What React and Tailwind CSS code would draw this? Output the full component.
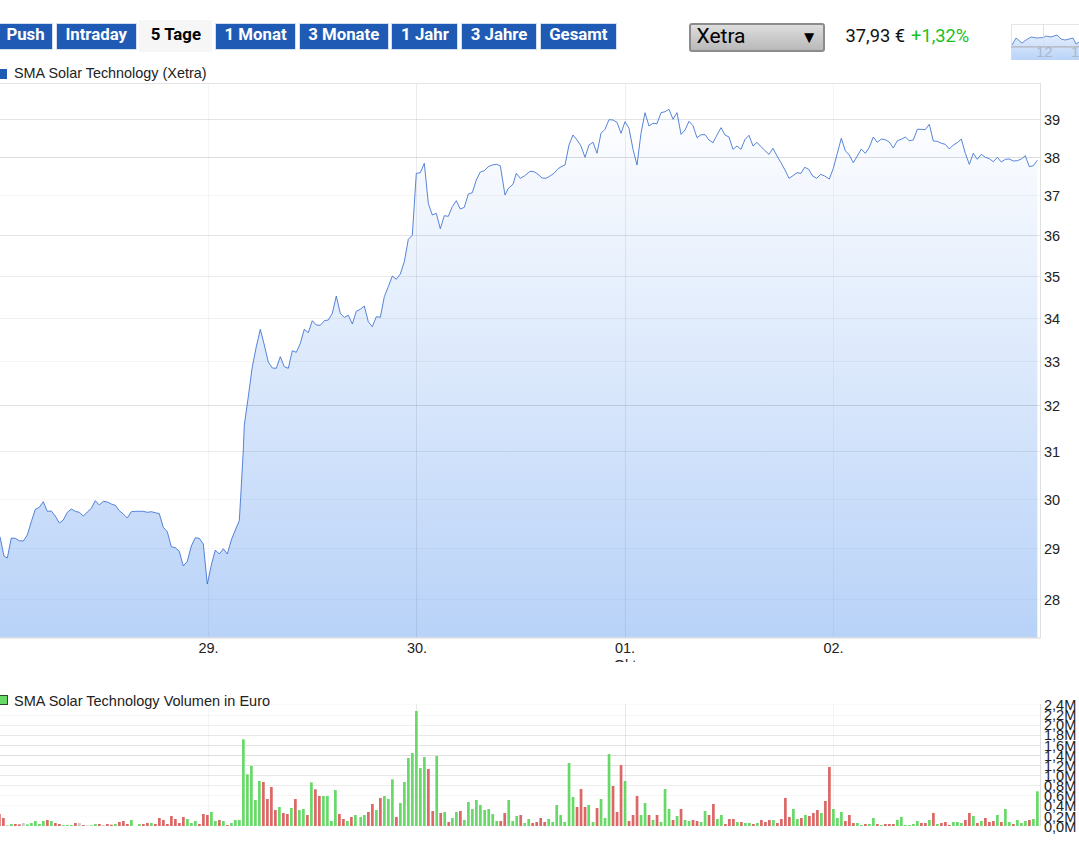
import React from "react";

const seg = (ox, oy, arr) => arr.map(([x, y]) => [ox + x / 3, oy + y / 3]);

const line = [
  ...seg(0, 480, [[0,170],[12,228],[22,234],[34,174],[46,175],[58,182],[70,183],[82,165],[94,125],[106,88],[118,82],[130,65],[142,94],[154,93],[166,108],[178,129],[190,120],[202,97],[214,87],[226,94],[238,97],[250,108],[262,96],[274,85],[286,62],[298,75],[310,64],[322,66],[334,72],[346,76],[358,92],[370,102],[382,114],[394,95],[406,94],[418,94],[430,94],[442,97],[454,95],[466,98],[478,101],[490,142],[502,155],[514,200],[526,203],[538,214],[550,258],[562,244],[574,198],[586,173],[598,175],[610,192],[622,312],[634,255],[646,210],[658,222],[670,206],[682,222],[694,180],[706,150],[718,122],[722,50]]),
  ...seg(230, 150, [[40,900],[43,825],[55,740],[67,650],[79,590],[91,538],[103,585],[115,636],[127,654],[139,655],[151,620],[163,650],[175,655],[187,602],[199,607],[211,580],[223,538],[235,548],[247,512],[259,525],[271,526],[283,512],[295,510],[307,490],[319,438],[331,490],[343,502],[355,496],[367,522],[379,484],[391,478],[403,468],[415,515],[427,530],[439,500],[451,502],[463,440],[475,410],[487,378],[499,388],[511,372],[523,335],[535,268],[547,256],[559,70],[571,68],[583,40],[595,160],[607,195],[619,190],[631,236],[643,197],[655,199],[667,170],[679,152],[691,177],[703,172],[715,132],[727,128],[739,90],[751,66],[763,62],[775,50],[787,45],[799,43],[811,47],[825,135],[835,115],[849,103],[859,70],[871,85],[883,78]]),
  ...seg(530, 90, [[0,244],[12,245],[24,253],[36,264],[48,265],[60,258],[72,250],[84,236],[96,229],[105,225],[117,165],[129,135],[141,150],[153,168],[165,202],[177,165],[189,157],[201,190],[213,130],[225,118],[237,89],[249,90],[261,97],[273,130],[285,95],[297,115],[309,178],[321,225],[333,130],[345,68],[357,108],[369,100],[381,101],[393,68],[405,65],[417,58],[429,88],[441,68],[453,133],[465,120],[477,94],[489,107],[501,143],[513,134],[525,134],[537,150],[549,158],[561,135],[573,113],[585,135],[597,141],[609,178],[621,168],[633,178],[645,148],[657,136],[669,168],[681,157],[693,170],[705,182],[717,193],[729,175],[741,198],[753,218],[765,240],[777,265],[789,257],[801,248],[813,250]]),
  ...seg(800, 90, [[14,232],[26,238],[38,258],[50,265],[62,253],[74,258],[88,267],[100,235],[112,190],[124,145],[136,182],[148,195],[160,218],[172,198],[184,177],[196,190],[208,172],[220,141],[232,157],[244,147],[256,149],[268,156],[280,174],[292,152],[304,148],[316,141],[328,152],[340,150],[352,118],[364,118],[376,119],[388,103],[400,153],[412,154],[424,160],[436,163],[448,177],[460,165],[472,158],[484,147],[496,190],[508,223],[520,190],[532,208],[544,193],[556,202],[568,206],[580,215],[592,202],[604,216],[616,208],[628,207],[640,213],[652,212],[664,207],[676,197],[688,230],[700,227],[712,211]]),
];

const Y0 = 83;
const linePts = line.map(([x, y]) => `${x.toFixed(1)},${y.toFixed(1)}`).join(" ");
const areaPts = `${linePts} ${line[line.length - 1][0].toFixed(1)},638 0,638`;

const hLines = [
  [119.5, 0.11], [157.5, 0.13], [195.5, 0.04], [235.5, 0.1], [276.5, 0.08], [318.5, 0.05],
  [361.5, 0.04], [405.5, 0.12], [451.5, 0.08], [499.5, 0.03], [548.5, 0.03], [599.5, 0.03],
];
const yLabels = [[39,119.5],[38,157.5],[37,195.5],[36,235.5],[35,276.5],[34,318.5],[33,361.5],[32,405.5],[31,451.5],[30,499.5],[29,548.5],[28,599.5]];
const vLines = [[208.5, 0.04], [416.5, 0.08], [625.5, 0.07], [833.5, 0.04]];
const dayLabels = [["29.", 208.5], ["30.", 417], ["01.", 625], ["02.", 833.5]];

const vol1 = "-2r372 10r384 22n405 34g402 46r402 58r403 70n399 82g403 94g399 106g393 118g402 130g393 142r390 154g393 166r399 178r402 190g405 202g405 214g405 226r399 238n399 250r405 262n406 274g406 286g402 298r402 310n405 322r402 334r404 346g402 358r396 370r393 382r402 394g390 418g402 430r402 442r399 454g399 466r402 478r384 490r390 502r402 514r378 526r387 538r399 550r381 562g387 574g399 586g393 598r402 610r372 622r375 634g366 646g393 658r390 670g393 682r405 694g399 706g390 718g390 730g148 742g253 754g228 766g330 778g273 790r276 802r327 814r291 826r360 838g351 850r369 862r372 874g354 886r327 898g360 910g357 922r375 934g277 946r298 958r318 970g318 982g318 994g393 1006g300 1018r372 1030r387 1042g393 1054r381 1066g375";
const vol2 = "2g381 13g375 25r366 37r342 49g360 61r324 73g318 85g327 97g268 109r381 121g339 133g276 145g204 157g189 169g63 181g234 193g201 205r237 218r363 230g198 242r369 254g366 266r396 277g384 289g366 301r363 313g390 325g336 337g357 349g330 361g345 374g360 386g357 398g372 410g393 422r393 434r369 446g330 458g393 470g378 482r375 494g399 506g387 518r399 530r396 542r384 554r396 566g387 578g396 590g345 602g375 614g396 627g219 639g321 651r351 663r297 675r351 686g345 699g396 711r354 723g327 735g384 747g192 759r288 771r366 783r225 795g273 807r393 819r375 831r318 843g375 855g339 867r375 879g390 891r375 903g396 915g297 927g357 939r390 951g378 963r357 975g390 987g393 999r390 1011r393 1023g396 1035g363 1047r375 1060r342 1072g387";
const vol3 = "4g375 16r402 28r387 40r387 52g396 64r396 76g399 88g399 100r402 112g399 124r390 136r396 148r390 160g390 172r399 184r387 196r324 208r381 220g357 232g387 244r384 256g375 268r378 280r369 292r360 304g369 316r333 328r231 340g357 352g384 364g366 376r393 388r375 400r399 412g399 424g405 436r402 448g402 460g384 472r402 484g405 496r402 508r402 520r402 532g390 544g381 556g405 568g405 580g402 592g393 604r399 616r399 628g390 640r369 652g402 664r399 676r396 688r405 700g396 712g396 724g399 736r390 748r369 760g378 772r399 784g393 796r384 808r396 820r393 832g375 844r396 856g357 868g396 880r402 892g390 904g399 916g393 928r390 940g387 952g304";

const VOL_TOP = 698;
const parse = (ox, s) =>
  s.split(" ").map((t) => {
    const m = t.match(/^(-?\d+)([rgn])(\d+)$/);
    return { x: ox + Number(m[1]) / 3, c: m[2], y: 690 + Number(m[3]) / 3 };
  });
const bars = [...parse(0, vol1), ...parse(360, vol2), ...parse(720, vol3)];
const barColor = { r: "#dc6767", g: "#68d968", n: "#c9c9c9" };

const volGrid = [
  [704.5, 0.02], [715.5, 0.04], [725.5, 0.06], [735.5, 0.09], [745.5, 0.11], [755.5, 0.13],
  [765.5, 0.11], [775.5, 0.09], [785.5, 0.07], [795.5, 0.04], [805.5, 0.02], [816.5, 0.01],
];
const volLabels = ["2,4M","2,2M","2,0M","1,8M","1,6M","1,4M","1,2M","1,0M","0,8M","0,6M","0,4M","0,2M","0,0M"];

const buttons = [
  { label: "Push", w: "w-[55px]" },
  { label: "Intraday", w: "w-[81px]" },
  { label: "5 Tage", w: "w-[73px]", active: true },
  { label: "1 Monat", w: "w-[81px]" },
  { label: "3 Monate", w: "w-[90px]" },
  { label: "1 Jahr", w: "w-[67px]" },
  { label: "3 Jahre", w: "w-[76px]" },
  { label: "Gesamt", w: "w-[77px]" },
];

const axisText = "font-['Liberation_Sans',sans-serif] text-[14.5px] fill-[#222222]";

function Thumbnail() {
  const pts = "1,21 5,14 11,19 15,16 20,13 26,14 32,13.5 35,12 40,13 46,11 50,15 54,16 58,15 62,14 65,20 68,18";
  return (
    <svg width="68" height="36" viewBox="0 0 68 36" className="block">
      <defs>
        <linearGradient id="thumbFill" x1="0" y1="0" x2="0" y2="1">
          <stop offset="0" stopColor="#e4edfc" />
          <stop offset="1" stopColor="#b9d3f8" />
        </linearGradient>
      </defs>
      <polygon points={`${pts} 68,36 0,36 0,22`} fill="url(#thumbFill)" />
      <polyline points={pts} fill="none" stroke="#3f74cf" strokeWidth="0.8" />
      <rect x="0" y="0" width="68" height="0.8" fill="#e0e0e0" />
      <rect x="0" y="0" width="0.8" height="36" fill="#dddddd" />
      <rect x="32" y="0" width="0.8" height="23" fill="#dddddd" />
      <rect x="0" y="22.4" width="68" height="1" fill="#a9a9a9" />
      <text x="25" y="33" className="font-['Liberation_Sans',sans-serif] text-[15px] fill-[#a9b8cc]">12</text>
      <text x="60" y="33" className="font-['Liberation_Sans',sans-serif] text-[15px] fill-[#a9b8cc]">13</text>
    </svg>
  );
}

function PriceChart() {
  return (
    <svg width="1079" height="579" viewBox={`0 ${Y0} 1079 579`} className="block">
      <defs>
        <linearGradient id="areaFill" gradientUnits="userSpaceOnUse" x1="0" y1="100" x2="0" y2="638">
          <stop offset="0" stopColor="#ffffff" />
          <stop offset="1" stopColor="#b8d2f8" />
        </linearGradient>
      </defs>
      <polygon points={areaPts} fill="url(#areaFill)" />
      {hLines.map(([y, a]) => (
        <line key={y} x1="0" x2="1040" y1={y} y2={y} stroke="#000" strokeOpacity={a} />
      ))}
      {vLines.map(([x, a]) => (
        <line key={x} x1={x} x2={x} y1="83" y2="638" stroke="#000" strokeOpacity={a} />
      ))}
      <polyline points={linePts} fill="none" stroke="#3a6fd0" strokeWidth="0.85" strokeLinejoin="round" />
      <line x1="0" x2="1040.5" y1="83.5" y2="83.5" stroke="#e4e4e4" />
      <line x1="1040.5" x2="1040.5" y1="83" y2="638" stroke="#e0e0e0" />
      <line x1="0" x2="1040.5" y1="638" y2="638" stroke="#e2e2e2" strokeWidth="1.5" />
      {yLabels.map(([t, y]) => (
        <text key={t} x="1044" y={y + 5} className={axisText}>{t}</text>
      ))}
      {dayLabels.map(([t, x]) => (
        <text key={t} x={x} y="653" textAnchor="middle" className={axisText}>{t}</text>
      ))}
      <text x="625" y="670" textAnchor="middle" className={axisText}>Okt</text>
    </svg>
  );
}

function VolumeChart() {
  const base = 826;
  return (
    <svg width="1079" height="146" viewBox={`0 ${VOL_TOP} 1079 146`} className="block">
      {volGrid.map(([y, a]) => (
        <line key={y} x1="0" x2="1040" y1={y} y2={y} stroke="#000" strokeOpacity={a} />
      ))}
      {vLines.map(([x], i) => (
        <line key={x} x1={x} x2={x} y1="704" y2={base} stroke="#000" strokeOpacity={i === 1 || i === 2 ? 0.09 : 0.04} />
      ))}
      {bars.map((b, i) => (
        <rect
          key={i}
          x={(b.x - 1.3).toFixed(2)}
          y={b.y.toFixed(2)}
          width="2.7"
          height={(base - b.y).toFixed(2)}
          fill={barColor[b.c]}
        />
      ))}
      <line x1="1040.5" x2="1040.5" y1="704" y2={base} stroke="#e0e0e0" />
      {volLabels.map((t, i) => (
        <text key={t} x="1044" y={(710 + i * 10.14).toFixed(1)} className={axisText}>{t}</text>
      ))}
    </svg>
  );
}

export default function App() {
  return (
    <div className="relative w-[1079px] h-[852px] overflow-hidden bg-white">
      <div className="flex items-start h-[44px] pt-[20px] box-content">
        <div className="flex items-center h-[32px] -ml-[2px] gap-[2.7px]">
          {buttons.map((b) =>
            b.active ? (
              <div
                key={b.label}
                className={`${b.w} h-[32px] pb-[3px] flex items-center justify-center bg-[#f6f6f6] text-black font-['Roboto',sans-serif] font-bold text-[16.8px] leading-none`}
              >
                {b.label}
              </div>
            ) : (
              <div
                key={b.label}
                className={`${b.w} h-[27px] pb-[3px] flex items-center justify-center bg-[#1f5bb5] border border-[#d4e0f2] text-white font-['Roboto',sans-serif] font-bold text-[16.8px] leading-none`}
              >
                {b.label}
              </div>
            )
          )}
        </div>
        <div className="ml-[71.7px] mt-[3px] w-[136px] h-[29px] flex items-center justify-between pl-[6px] pr-[5px] border-2 border-[#8c8c8c] rounded-[3px] bg-gradient-to-b from-[#dedede] to-[#b9b9b9] text-black font-['Roboto',sans-serif] text-[21px] leading-none">
          <span className="-mt-[3px]">Xetra</span>
          <span className="text-[17px] leading-none">▼</span>
        </div>
        <div className="ml-[21px] mt-[4px] h-[24px] flex items-center gap-[6px] font-['Roboto',sans-serif] text-[18.3px] whitespace-nowrap">
          <span className="text-[#111111]">37,93 €</span>
          <span className="text-[#19c11e]">+1,32%</span>
        </div>
        <div className="ml-auto mt-[4px]">
          <Thumbnail />
        </div>
      </div>

      <div className="flex items-center h-[19px] font-['Liberation_Sans',sans-serif] text-[14.4px] text-[#222222]">
        <span className="w-[7px] h-[10px] bg-[#1f5bb5] mr-[7px]" />
        <span>SMA Solar Technology (Xetra)</span>
      </div>

      <PriceChart />

      <div className="mt-[30px] h-[6px] flex items-start font-['Liberation_Sans',sans-serif] text-[14.5px] leading-[18px] text-[#222222]">
        <span className="w-[8px] h-[10px] mt-[3px] bg-[#68d968] border border-[#2c4a2c] border-l-0 mr-[6px]" />
        <span>SMA Solar Technology Volumen in Euro</span>
      </div>

      <VolumeChart />
    </div>
  );
}
